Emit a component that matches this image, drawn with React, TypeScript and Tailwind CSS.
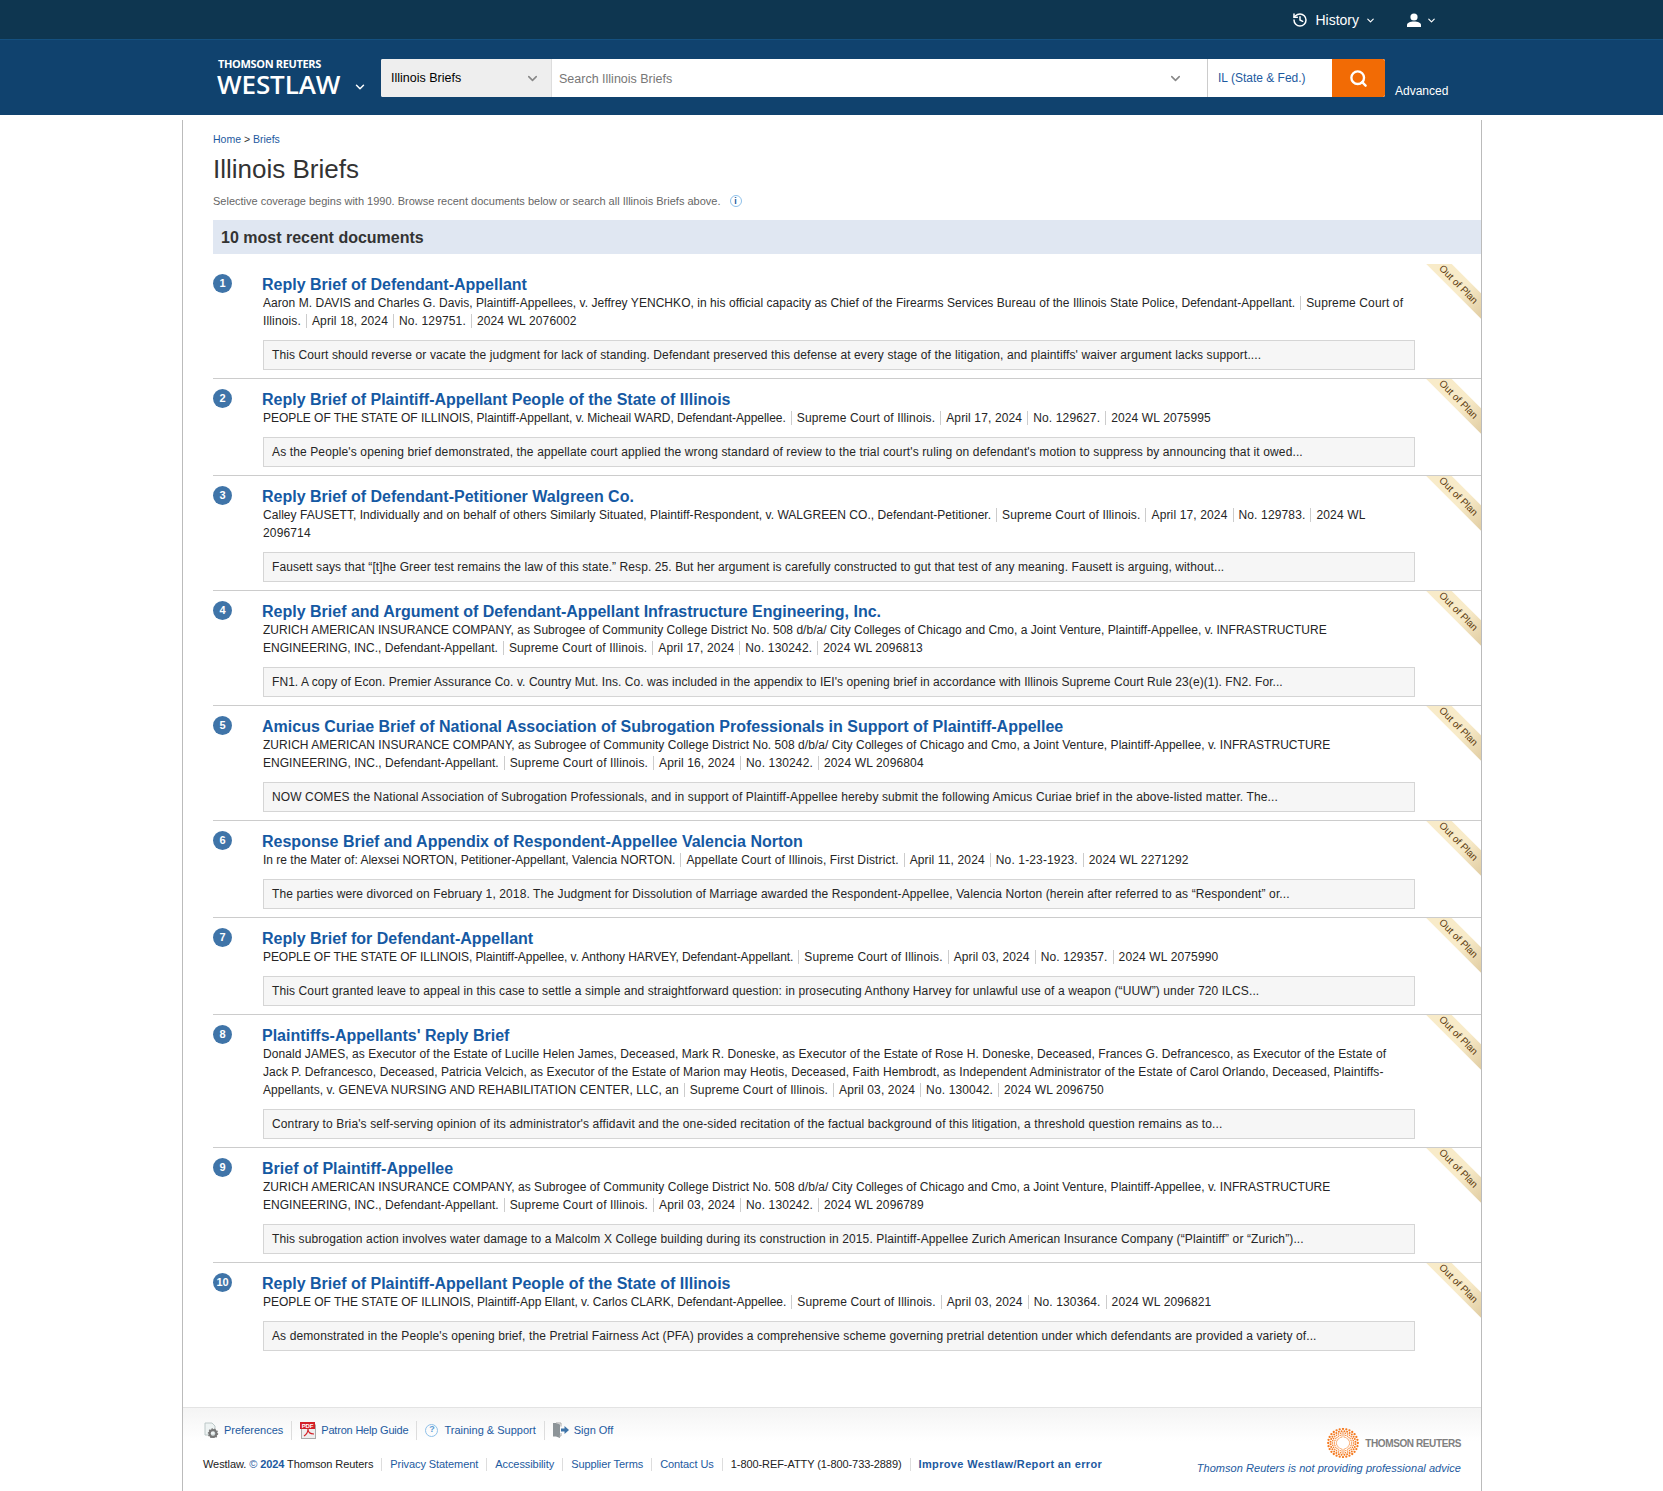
import { ChevronDown, History, Search } from "lucide-react";

const briefs = [
  {
    title: "Reply Brief of Defendant-Appellant",
    parties: "Aaron M. DAVIS and Charles G. Davis, Plaintiff-Appellees, v. Jeffrey YENCHKO, in his official capacity as Chief of the Firearms Services Bureau of the Illinois State Police, Defendant-Appellant.",
    track: "tracking-[0.05px]",
    meta: ["Supreme Court of Illinois.", "April 18, 2024", "No. 129751.", "2024 WL 2076002"],
    excerpt: "This Court should reverse or vacate the judgment for lack of standing. Defendant preserved this defense at every stage of the litigation, and plaintiffs' waiver argument lacks support....",
    excerptTrack: "tracking-[0.11px]",
  },
  {
    title: "Reply Brief of Plaintiff-Appellant People of the State of Illinois",
    parties: "PEOPLE OF THE STATE OF ILLINOIS, Plaintiff-Appellant, v. Micheail WARD, Defendant-Appellee.",
    track: "tracking-[-0.035px]",
    meta: ["Supreme Court of Illinois.", "April 17, 2024", "No. 129627.", "2024 WL 2075995"],
    excerpt: "As the People's opening brief demonstrated, the appellate court applied the wrong standard of review to the trial court's ruling on defendant's motion to suppress by announcing that it owed...",
    excerptTrack: "tracking-[0.125px]",
  },
  {
    title: "Reply Brief of Defendant-Petitioner Walgreen Co.",
    parties: "Calley FAUSETT, Individually and on behalf of others Similarly Situated, Plaintiff-Respondent, v. WALGREEN CO., Defendant-Petitioner.",
    track: "tracking-[0.04px]",
    meta: ["Supreme Court of Illinois.", "April 17, 2024", "No. 129783.", "2024 WL 2096714"],
    excerpt: "Fausett says that “[t]he Greer test remains the law of this state.” Resp. 25. But her argument is carefully constructed to gut that test of any meaning. Fausett is arguing, without...",
    excerptTrack: "tracking-[0.09px]",
  },
  {
    title: "Reply Brief and Argument of Defendant-Appellant Infrastructure Engineering, Inc.",
    parties: "ZURICH AMERICAN INSURANCE COMPANY, as Subrogee of Community College District No. 508 d/b/a/ City Colleges of Chicago and Cmo, a Joint Venture, Plaintiff-Appellee, v. INFRASTRUCTURE ENGINEERING, INC., Defendant-Appellant.",
    track: "tracking-[0.02px]",
    meta: ["Supreme Court of Illinois.", "April 17, 2024", "No. 130242.", "2024 WL 2096813"],
    excerpt: "FN1. A copy of Econ. Premier Assurance Co. v. Country Mut. Ins. Co. was included in the appendix to IEI's opening brief in accordance with Illinois Supreme Court Rule 23(e)(1). FN2. For...",
    excerptTrack: "tracking-[0.065px]",
  },
  {
    title: "Amicus Curiae Brief of National Association of Subrogation Professionals in Support of Plaintiff-Appellee",
    parties: "ZURICH AMERICAN INSURANCE COMPANY, as Subrogee of Community College District No. 508 d/b/a/ City Colleges of Chicago and Cmo, a Joint Venture, Plaintiff-Appellee, v. INFRASTRUCTURE ENGINEERING, INC., Defendant-Appellant.",
    track: "tracking-[0.04px]",
    meta: ["Supreme Court of Illinois.", "April 16, 2024", "No. 130242.", "2024 WL 2096804"],
    excerpt: "NOW COMES the National Association of Subrogation Professionals, and in support of Plaintiff-Appellee hereby submit the following Amicus Curiae brief in the above-listed matter. The...",
    excerptTrack: "tracking-[0.115px]",
  },
  {
    title: "Response Brief and Appendix of Respondent-Appellee Valencia Norton",
    parties: "In re the Mater of: Alexsei NORTON, Petitioner-Appellant, Valencia NORTON.",
    track: "tracking-[0px]",
    meta: ["Appellate Court of Illinois, First District.", "April 11, 2024", "No. 1-23-1923.", "2024 WL 2271292"],
    excerpt: "The parties were divorced on February 1, 2018. The Judgment for Dissolution of Marriage awarded the Respondent-Appellee, Valencia Norton (herein after referred to as “Respondent” or...",
    excerptTrack: "tracking-[0.11px]",
  },
  {
    title: "Reply Brief for Defendant-Appellant",
    parties: "PEOPLE OF THE STATE OF ILLINOIS, Plaintiff-Appellee, v. Anthony HARVEY, Defendant-Appellant.",
    track: "tracking-[-0.07px]",
    meta: ["Supreme Court of Illinois.", "April 03, 2024", "No. 129357.", "2024 WL 2075990"],
    excerpt: "This Court granted leave to appeal in this case to settle a simple and straightforward question: in prosecuting Anthony Harvey for unlawful use of a weapon (“UUW”) under 720 ILCS...",
    excerptTrack: "tracking-[0.115px]",
  },
  {
    title: "Plaintiffs-Appellants' Reply Brief",
    parties: "Donald JAMES, as Executor of the Estate of Lucille Helen James, Deceased, Mark R. Doneske, as Executor of the Estate of Rose H. Doneske, Deceased, Frances G. Defrancesco, as Executor of the Estate of Jack P. Defrancesco, Deceased, Patricia Velcich, as Executor of the Estate of Marion may Heotis, Deceased, Faith Hembrodt, as Independent Administrator of the Estate of Carol Orlando, Deceased, Plaintiffs-Appellants, v. GENEVA NURSING AND REHABILITATION CENTER, LLC, an",
    track: "tracking-[0.07px]",
    meta: ["Supreme Court of Illinois.", "April 03, 2024", "No. 130042.", "2024 WL 2096750"],
    excerpt: "Contrary to Bria's self-serving opinion of its administrator's affidavit and the one-sided recitation of the factual background of this litigation, a threshold question remains as to...",
    excerptTrack: "tracking-[0.135px]",
  },
  {
    title: "Brief of Plaintiff-Appellee",
    parties: "ZURICH AMERICAN INSURANCE COMPANY, as Subrogee of Community College District No. 508 d/b/a/ City Colleges of Chicago and Cmo, a Joint Venture, Plaintiff-Appellee, v. INFRASTRUCTURE ENGINEERING, INC., Defendant-Appellant.",
    track: "tracking-[0.04px]",
    meta: ["Supreme Court of Illinois.", "April 03, 2024", "No. 130242.", "2024 WL 2096789"],
    excerpt: "This subrogation action involves water damage to a Malcolm X College building during its construction in 2015. Plaintiff-Appellee Zurich American Insurance Company (“Plaintiff” or “Zurich”)...",
    excerptTrack: "tracking-[0.12px]",
  },
  {
    title: "Reply Brief of Plaintiff-Appellant People of the State of Illinois",
    parties: "PEOPLE OF THE STATE OF ILLINOIS, Plaintiff-App Ellant, v. Carlos CLARK, Defendant-Appellee.",
    track: "tracking-[-0.02px]",
    meta: ["Supreme Court of Illinois.", "April 03, 2024", "No. 130364.", "2024 WL 2096821"],
    excerpt: "As demonstrated in the People's opening brief, the Pretrial Fairness Act (PFA) provides a comprehensive scheme governing pretrial detention under which defendants are provided a variety of...",
    excerptTrack: "tracking-[0.11px]",
  },
];

// dots of the Thomson Reuters ring, fine on the inside and heavier outwards
const logoDots = [6.5, 8.5, 10.5, 12.5, 14.8].flatMap((r, ring) =>
  Array.from({ length: 28 }, (_, i) => {
    const a = ((i + ring * 0.5) / 28) * Math.PI * 2;
    return { x: 16 + Math.cos(a) * r, y: 15 + Math.sin(a) * r * 0.95, r: 0.5 + ring * 0.16 };
  })
);

const Sep = () => <span className="mx-[5px] inline-block h-[14px] w-px bg-[#ccc] align-[-3px]" />;
const FootSep = () => <span className="mx-[8px] h-[13px] w-px bg-[#ddd]" />;
const ToolSep = () => <span className="mx-[8px] h-[19px] w-px bg-[#ddd]" />;

const Ribbon = () => (
  <div className="absolute right-0 top-0 h-[56px] w-[55px] overflow-hidden">
    <div className="absolute left-[-12px] top-[12px] flex h-[18px] w-[92px] rotate-45 items-center justify-center bg-gradient-to-r from-[#f8ebc9] from-55% to-[#dcc79b] pr-[3px] text-[10px] text-[#5c3c10]">
      Out of Plan
    </div>
  </div>
);

const App = () => {
  return (
    <div className="min-h-[1491px] bg-white font-['Liberation_Sans',Arial,sans-serif] text-[#252525]">
      <div className="flex h-[40px] items-center justify-end border-b border-[#14507f] bg-[#0e3650] pr-[226px] pt-[1px] text-white">
        <History size={16} strokeWidth={2.25} />
        <span className="ml-[7px] text-[14px]">History</span>
        <ChevronDown size={11} strokeWidth={2.5} className="ml-[6px]" />
        <svg width="14" height="14" viewBox="0 0 14 14" fill="white" className="ml-[31px]">
          <circle cx="7" cy="4" r="3.6" />
          <path d="M0 14v-2c0-2.4 3-3.6 7-3.6s7 1.2 7 3.6v2z" />
        </svg>
        <ChevronDown size={11} strokeWidth={2.5} className="ml-[5px]" />
      </div>

      <header className="flex h-[75px] bg-[#10426e] pl-[217px] pt-[19px]">
        <div className="w-[164px] text-white">
          <div className="pl-[1px] font-['Open_Sans',sans-serif] text-[11px] font-bold leading-[10px] tracking-[-0.35px]">THOMSON REUTERS</div>
          <div className="flex items-center">
            <span className="font-['Open_Sans',sans-serif] text-[26px] font-semibold leading-[30px] tracking-[-0.1px]">WESTLAW</span>
            <ChevronDown size={14} strokeWidth={2.5} className="ml-[13px] mt-[5px]" />
          </div>
        </div>
        <div className="flex h-[38px] w-[1004px] overflow-hidden rounded-[2px] bg-white text-[12.5px]">
          <div className="flex w-[171px] items-center justify-between border-r border-[#ddd] bg-[#eee] pl-[10px] pr-[11px]">
            <span className="text-black">Illinois Briefs</span>
            <ChevronDown size={15} strokeWidth={2.5} className="text-[#888]" />
          </div>
          <div className="flex flex-1 items-center justify-between pl-[7px] pr-[24px] text-[#777]">
            <span className="mt-[2px]">Search Illinois Briefs</span>
            <ChevronDown size={15} strokeWidth={2.5} className="text-[#888]" />
          </div>
          <div className="flex w-[125px] items-center border-l border-[#ccc] pl-[10px] text-[#1d5aa0]">
            <span className="mb-[1px] text-[12px]">IL (State &amp; Fed.)</span>
          </div>
          <div className="flex w-[53px] items-center justify-center rounded-r-[2px] bg-[#f26b05] text-white">
            <Search size={19} strokeWidth={3} />
          </div>
        </div>
        <div className="ml-[10px] pt-[23px] text-[12px] text-white">Advanced</div>
      </header>

      <div className="mx-[182px] mt-[5px] w-[1300px] border-x border-b border-[#bbb]">
        <main className="pl-[30px] pt-[13px]">
          <div className="text-[10.5px] leading-[12px] text-[#333]">
            <span className="text-[#1d5aa0]">Home</span> &gt; <span className="text-[#1d5aa0]">Briefs</span>
          </div>
          <h1 className="mt-[8px] text-[26px] leading-[32px] text-[#333]">Illinois Briefs</h1>
          <div className="mt-[10px] flex items-center text-[11px] leading-[12px] text-[#666]">
            Selective coverage begins with 1990. Browse recent documents below or search all Illinois Briefs above.
            <span className="ml-[9px] flex h-[12px] w-[12px] items-center justify-center rounded-full border border-[#8fc1ea] text-[9px] font-bold text-[#1d5aa0]">i</span>
          </div>
          <div className="mt-[13px] flex h-[34px] items-center bg-[#e0e7f2] pl-[8px] pt-[1px] text-[16px] font-bold text-[#333]">10 most recent documents</div>

          <ol className="mt-[9px]">
            {briefs.map((brief, index) => (
              <li key={index} className="relative flex border-t border-[#ccc] pb-[8px] first:border-transparent">
                <div className="w-[49px] shrink-0 pt-[10px]">
                  <div className="flex h-[19px] w-[19px] items-center justify-center rounded-full bg-[#3f74a8] text-[11px] font-bold text-white">{index + 1}</div>
                </div>
                <div className="w-[1153px] shrink-0 pt-[11px]">
                  <h2 className="text-[16px] font-bold leading-[19px] text-[#1559a3]">{brief.title}</h2>
                  <p className="pl-[1px] pr-[8px] text-[12px] leading-[18px]">
                    <span className={brief.track}>{brief.parties}</span>
                    <Sep />
                    {brief.meta.map((item, i) => (
                      <span key={i} className="tracking-[0.14px]">
                        {item}
                        {i < brief.meta.length - 1 && <Sep />}
                      </span>
                    ))}
                  </p>
                  <div className={`ml-[1px] mt-[10px] flex h-[30px] items-center border border-[#d5d5d5] bg-[#f6f6f6] pl-[8px] text-[12px] ${brief.excerptTrack}`}>{brief.excerpt}</div>
                </div>
                <Ribbon />
              </li>
            ))}
          </ol>
        </main>

        <footer className="mt-[48px] flex h-[84px] justify-between border-t border-[#e3e3e3] bg-gradient-to-b from-[#f4f4f4] to-white to-40% pl-[21px] pr-[20px] text-[11px] text-[#1d5aa0]">
          <div>
            <div className="mt-[12px] flex h-[20px] items-center">
              <span className="flex items-center">
                <svg width="15" height="16" viewBox="0 0 15 16" className="mr-[5px]">
                  <path d="M1 1h7l3 3v9H1z" fill="#eef3f3" stroke="#bcc8c8" />
                  <circle cx="9" cy="11.500" r="3.400" fill="none" stroke="#777" strokeWidth="2.200" />
                  <circle cx="9" cy="11.500" r="4.600" fill="none" stroke="#777" strokeWidth="1.200" strokeDasharray="1.4 1.4" />
                </svg>
                Preferences
              </span>
              <ToolSep />
              <span className="flex items-center tracking-[-0.2px]">
                <svg width="16" height="17" viewBox="0 0 16 17" className="mr-[5px]">
                  <rect x="1.500" y="3" width="14" height="13.500" fill="#eee" stroke="#aaa" />
                  <rect x="0" y="0" width="15" height="7" fill="#d32027" />
                  <text x="7.500" y="6" textAnchor="middle" fontSize="6" fontWeight="bold" fill="white">PDF</text>
                  <path d="M4 14c3-2 4-4 4-7 0 3 2 5 6 5" fill="none" stroke="#d32027" strokeWidth="1.200" />
                </svg>
                Patron Help Guide
              </span>
              <ToolSep />
              <span className="flex items-center">
                <span className="mr-[6px] flex h-[13px] w-[13px] items-center justify-center rounded-full border border-[#8fc1ea] text-[9px] font-bold text-[#5b9bd5]">?</span>
                Training &amp; Support
              </span>
              <ToolSep />
              <span className="flex items-center">
                <svg width="17" height="17" viewBox="0 0 17 17" className="mr-[4px]">
                  <path d="M0 1h3l4 1.500V16l-4-1.500H0z" fill="#8d9498" />
                  <path d="M3 1h5v3.500M8 11v3H6" fill="none" stroke="#aaa" />
                  <path d="M8 6.500h3.500V4l4.500 4-4.500 4V9.500H8z" fill="#3f74a8" />
                </svg>
                Sign Off
              </span>
            </div>
            <div className="-ml-[1px] mt-[18px] flex items-center leading-[13px] tracking-[-0.08px]">
              <span className="text-[#222]">Westlaw. <span className="text-[#1d5aa0]">©</span> <b className="text-[#1d5aa0]">2024</b> Thomson Reuters</span>
              <FootSep />
              <span>Privacy Statement</span>
              <FootSep />
              <span>Accessibility</span>
              <FootSep />
              <span>Supplier Terms</span>
              <FootSep />
              <span>Contact Us</span>
              <FootSep />
              <span className="text-[#222]">1-800-REF-ATTY (1-800-733-2889)</span>
              <FootSep />
              <b className="tracking-[0.35px]">Improve Westlaw/Report an error</b>
            </div>
          </div>
          <div className="flex flex-col items-end pt-[20px]">
            <div className="flex items-center">
              <svg width="32" height="30" viewBox="0 0 32 30" className="mr-[6px]">
                {logoDots.map((dot, i) => (
                  <circle key={i} cx={dot.x} cy={dot.y} r={dot.r} fill="#f47a20" />
                ))}
              </svg>
              <span className="text-[10px] font-bold tracking-[-0.4px] text-[#808080]">THOMSON REUTERS</span>
            </div>
            <i className="mt-[2px] tracking-[0.05px]">Thomson Reuters is not providing professional advice</i>
          </div>
        </footer>
      </div>
    </div>
  );
};

export default App;
